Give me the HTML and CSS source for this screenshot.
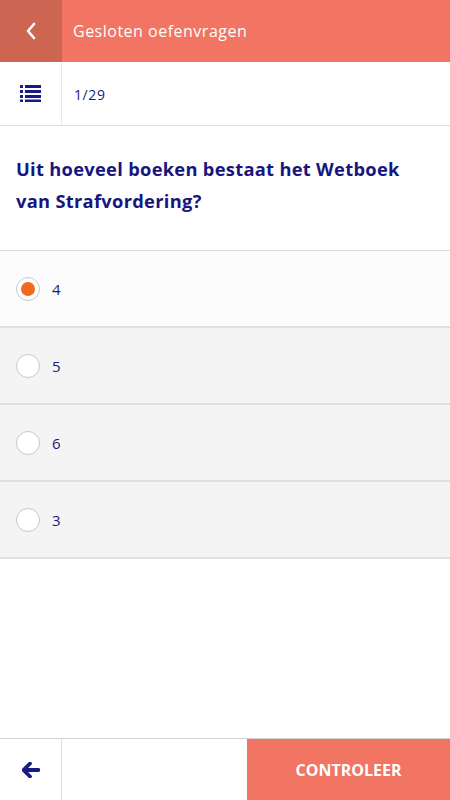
FILE: index.html
```html
<!DOCTYPE html>
<html lang="nl">
<head>
<meta charset="utf-8">
<title>Gesloten oefenvragen</title>
<link rel="stylesheet" href="styles.css">
</head>
<body>
<div class="app">
  <header class="topbar">
    <div class="back">
      <svg width="12" height="18" viewBox="0 0 12 18"><path d="M9 2 L3 9 L9 16" fill="none" stroke="#fff" stroke-width="2.6" stroke-linecap="round" stroke-linejoin="round"/></svg>
    </div>
    <div class="title">Gesloten oefenvragen</div>
  </header>
  <div class="subbar">
    <div class="listbtn">
      <svg width="22" height="18" viewBox="0 0 22 18">
        <rect x="0" y="1" width="3" height="3" fill="#1a1a86"/>
        <rect x="5" y="1" width="16" height="3" fill="#1a1a86"/>
        <rect x="0" y="6" width="3" height="3" fill="#1a1a86"/>
        <rect x="5" y="6" width="16" height="3" fill="#1a1a86"/>
        <rect x="0" y="11" width="3" height="3" fill="#1a1a86"/>
        <rect x="5" y="11" width="16" height="3" fill="#1a1a86"/>
        <rect x="0" y="15.5" width="3" height="2.5" fill="#1a1a86"/>
        <rect x="5" y="15.5" width="16" height="2.5" fill="#1a1a86"/>
      </svg>
    </div>
    <div class="counter">1/29</div>
  </div>
  <div class="question">Uit hoeveel boeken bestaat het Wetboek van Strafvordering?</div>
  <ul class="options">
    <li class="option selected"><span class="radio"></span><span class="label">4</span></li>
    <li class="option"><span class="radio"></span><span class="label">5</span></li>
    <li class="option"><span class="radio"></span><span class="label">6</span></li>
    <li class="option"><span class="radio"></span><span class="label">3</span></li>
  </ul>
  <div class="spacer"></div>
  <footer class="bottombar">
    <div class="prev">
      <svg width="18" height="16" viewBox="0 0 18 16"><path d="M8 1.5 L1.5 8 L8 14.5 M2.5 8 H16.5" fill="none" stroke="#1a1a86" stroke-width="3.8" stroke-linecap="round" stroke-linejoin="round"/></svg>
    </div>
    <div class="fill"></div>
    <button class="check">CONTROLEER</button>
  </footer>
</div>
</body>
</html>
```
FILE: styles.css
```css
* { box-sizing: border-box; }
html, body { margin: 0; padding: 0; }
body {
  font-family: "Open Sans", "Noto Sans", sans-serif;
  background: #fff;
  color: #16167e;
}
.app {
  width: 450px;
  height: 800px;
  display: flex;
  flex-direction: column;
}
.topbar {
  height: 62px;
  display: flex;
  background: #f27462;
}
.back {
  width: 62px;
  background: #cd6553;
  display: flex;
  align-items: center;
  justify-content: center;
}
.title {
  display: flex;
  align-items: center;
  padding-left: 11px;
  color: #fff;
  font-size: 16px;
  letter-spacing: 0.5px;
}
.subbar {
  height: 64px;
  display: flex;
  border-bottom: 1px solid #dedede;
}
.listbtn {
  width: 62px;
  border-right: 1px solid #e8e8e8;
  display: flex;
  align-items: center;
  justify-content: center;
  padding-bottom: 2px;
}
.counter {
  display: flex;
  align-items: center;
  padding-left: 12px;
  padding-top: 2px;
  font-size: 14px;
  letter-spacing: 0.6px;
  color: #1a1a80;
}
.question {
  padding: 27px 30px 33px 16px;
  font-size: 18.3px;
  font-weight: 700;
  line-height: 32px;
  letter-spacing: 0.3px;
  color: #16167e;
  border-bottom: 1px solid #dedede;
}
.options {
  list-style: none;
  margin: 0;
  padding: 0;
}
.option {
  height: 77px;
  display: flex;
  align-items: center;
  padding-left: 16px;
  background: #f4f4f4;
  border-bottom: 2px solid #e0e0e0;
}
.option.selected { background: #fcfcfc; }
.radio {
  width: 24px;
  height: 24px;
  border-radius: 50%;
  border: 1px solid #c8c8c8;
  background: #fff;
  display: flex;
  align-items: center;
  justify-content: center;
}
.option.selected .radio::after {
  content: "";
  width: 14px;
  height: 14px;
  border-radius: 50%;
  background: #f26a1e;
}
.label {
  margin-left: 12px;
  font-size: 15px;
  color: #1a1a80;
}
.spacer { flex: 1; }
.bottombar {
  height: 62px;
  display: flex;
  border-top: 1px solid #d0d0d0;
}
.prev {
  width: 62px;
  border-right: 1px solid #e0e0e0;
  display: flex;
  align-items: center;
  justify-content: center;
}
.fill { flex: 1; }
.check {
  width: 203px;
  border: 0;
  background: #f27462;
  color: #fff;
  font-family: "Open Sans", "Noto Sans", sans-serif;
  font-weight: 700;
  font-size: 16px;
  letter-spacing: 0;
  padding: 0;
}
```
